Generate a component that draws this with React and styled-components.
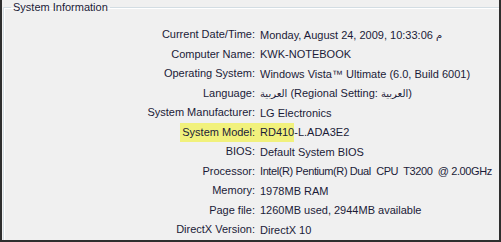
import React from "react";
import styled, { createGlobalStyle } from "styled-components";

const GlobalStyle = createGlobalStyle`
  html, body {
    margin: 0;
    padding: 0;
    background: #f0f0f0;
  }
`;

const Window = styled.div`
  width: 501px;
  height: 242px;
  box-sizing: border-box;
  background: #f0f0f0;
  border: 2px solid #2e2e2e;
  border-top: none;
  overflow: hidden;
  font-family: "Liberation Sans", "DejaVu Sans", sans-serif;
  font-size: 11px;
  color: #1b1b38;
`;

const GroupBox = styled.fieldset`
  margin: 0 0 0 1px;
  padding: 10px 0 0 0;
  border: none;
  border-top: 1px solid #d3dde3;
  border-left: 1px solid #d3dde3;
  box-shadow: inset 1px 1px 0 #ffffff;
  height: 100%;
  box-sizing: border-box;
`;

const Legend = styled.legend`
  margin-left: 7px;
  padding: 0 2px;
  line-height: 15px;
  font-size: 11px;
`;

const InfoGrid = styled.div`
  display: grid;
  grid-template-columns: 256px 1fr;
  grid-auto-rows: 19.5px;
  align-items: center;
`;

const Label = styled.div`
  text-align: right;
  white-space: nowrap;
`;

const LabelText = styled.span`
  display: inline-block;
  line-height: 19px;
  padding: 0 5px 0 ${(p) => (p.$mark ? "2px" : "0")};
  background: ${(p) => (p.$mark ? "#f1f17c" : "transparent")};
`;

const Value = styled.div`
  white-space: pre;
  letter-spacing: ${(p) => (p.$tight ? "-0.4px" : "normal")};
`;

const Mark = styled.span`
  display: inline-block;
  line-height: 19px;
  background: #f1f17c;
`;

const Arabic = styled.bdi`
  font-family: "DejaVu Sans", sans-serif;
  font-size: 10px;
`;

const rows = [
  { label: "Current Date/Time", value: <>Monday, August 24, 2009, 10:33:06 <Arabic>م</Arabic></> },
  { label: "Computer Name", value: "KWK-NOTEBOOK" },
  { label: "Operating System", value: "Windows Vista™ Ultimate (6.0, Build 6001)" },
  {
    label: "Language",
    value: (
      <>
        <Arabic>العربية</Arabic> (Regional Setting: <Arabic>العربية</Arabic>)
      </>
    ),
  },
  { label: "System Manufacturer", value: "LG Electronics" },
  { label: "System Model", mark: true, value: <><Mark>RD410</Mark>-L.ADA3E2</> },
  { label: "BIOS", value: "Default System BIOS" },
  { label: "Processor", tight: true, value: "Intel(R) Pentium(R) Dual  CPU  T3200  @ 2.00GHz" },
  { label: "Memory", value: "1978MB RAM" },
  { label: "Page file", value: "1260MB used, 2944MB available" },
  { label: "DirectX Version", value: "DirectX 10" },
];

export default function App() {
  return (
    <>
      <GlobalStyle />
      <Window>
        <GroupBox>
          <Legend>System Information</Legend>
          <InfoGrid>
            {rows.map((row) => (
              <React.Fragment key={row.label}>
                <Label>
                  <LabelText $mark={row.mark}>{row.label}:</LabelText>
                </Label>
                <Value $tight={row.tight}>{row.value}</Value>
              </React.Fragment>
            ))}
          </InfoGrid>
        </GroupBox>
      </Window>
    </>
  );
}
